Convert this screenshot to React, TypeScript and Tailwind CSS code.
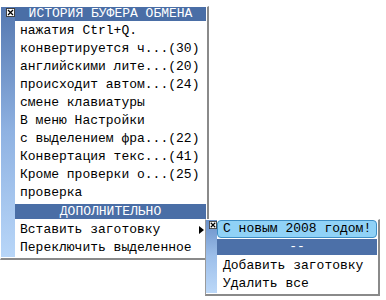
import React from "react";

const CloseBox = ({ size }: { size: number }) => (
  <svg width={size} height={size} viewBox="0 0 9 9" className="block">
    <rect x="0.5" y="0.5" width="8" height="8" fill="#ffffff" stroke="#404040" />
    <path d="M2 2 L7 7 M7 2 L2 7" stroke="#000" strokeWidth="1.3" />
  </svg>
);

const items = [
  "нажатия Ctrl+Q.",
  "конвертируется ч...(30)",
  "английскими лите...(20)",
  "происходит автом...(24)",
  "смене клавиатуры",
  "В меню Настройки",
  "с выделением фра...(22)",
  "Конвертация текс...(41)",
  "Кроме проверки о...(25)",
  "проверка",
];

const font = { fontFamily: '"Liberation Mono", "Courier New", monospace' };

export default function App() {
  return (
    <div className="relative w-[386px] h-[300px] bg-white text-[13px] text-black" style={font}>
      <div className="pt-[6px]">
        <div className="w-[209px] flex border-t border-l border-white border-r-2 border-b-2 border-r-[#8a8a8a] border-b-[#8a8a8a] pr-[1px] pb-[1px] bg-white">
          <div className="relative w-[14px] bg-gradient-to-b from-[#5578b0] via-[#8fb2e2] to-[#b8d6f8]">
            <div className="absolute left-[5px] top-[1px]">
              <CloseBox size={9} />
            </div>
          </div>
          <div className="flex-1 flex flex-col">
            <div className="h-[14px] leading-[14px] bg-[#4a6ea6] text-white text-center whitespace-nowrap">
              ИСТОРИЯ БУФЕРА ОБМЕНА
            </div>
            <div className="pt-[1px]">
              {items.map((t) => (
                <div key={t} className="h-[18px] leading-[18px] pl-[5px] whitespace-nowrap">
                  {t}
                </div>
              ))}
            </div>
            <div className="mt-[2px] mb-[2px] h-[15px] leading-[15px] bg-[#4a6ea6] text-white text-center whitespace-nowrap">
              ДОПОЛНИТЕЛЬНО
            </div>
            <div className="h-[18px] leading-[18px] pl-[5px] pr-[2px] flex items-center justify-between whitespace-nowrap">
              <span>Вставить заготовку</span>
              <svg width="5" height="8" viewBox="0 0 5 8" className="block">
                <path d="M0 0 L5 4 L0 8 Z" fill="#000" />
              </svg>
            </div>
            <div className="h-[18px] leading-[18px] pl-[5px] whitespace-nowrap">Переключить выделенное</div>
          </div>
        </div>
      </div>

      <div className="absolute left-[205px] top-[219px] w-[175px] flex border-t border-l border-t-white border-l-[#9a9a9a] border-r-2 border-b-2 border-r-[#8a8a8a] border-b-[#8a8a8a] pr-[1px] pb-[1px] bg-white">
        <div className="relative w-[11px] bg-gradient-to-b from-[#6a90c8] via-[#9dbfea] to-[#bcd8f8]">
          <div className="absolute left-[3px] top-[1px]">
            <CloseBox size={8} />
          </div>
        </div>
        <div className="flex-1 flex flex-col">
          <div className="h-[18px] leading-[16px] pl-[5px] bg-[#90d2f7] border border-[#3f8fc6] rounded-[4px] whitespace-nowrap">
            С новым 2008 годом!
          </div>
          <div className="mt-[1px] mb-[1px] h-[16px] leading-[16px] bg-[#4c70a8] text-white text-center">--</div>
          <div className="pt-[1px]">
            <div className="h-[18px] leading-[18px] pl-[6px] whitespace-nowrap">Добавить заготовку</div>
            <div className="h-[18px] leading-[18px] pl-[6px] whitespace-nowrap">Удалить все</div>
          </div>
        </div>
      </div>
    </div>
  );
}
